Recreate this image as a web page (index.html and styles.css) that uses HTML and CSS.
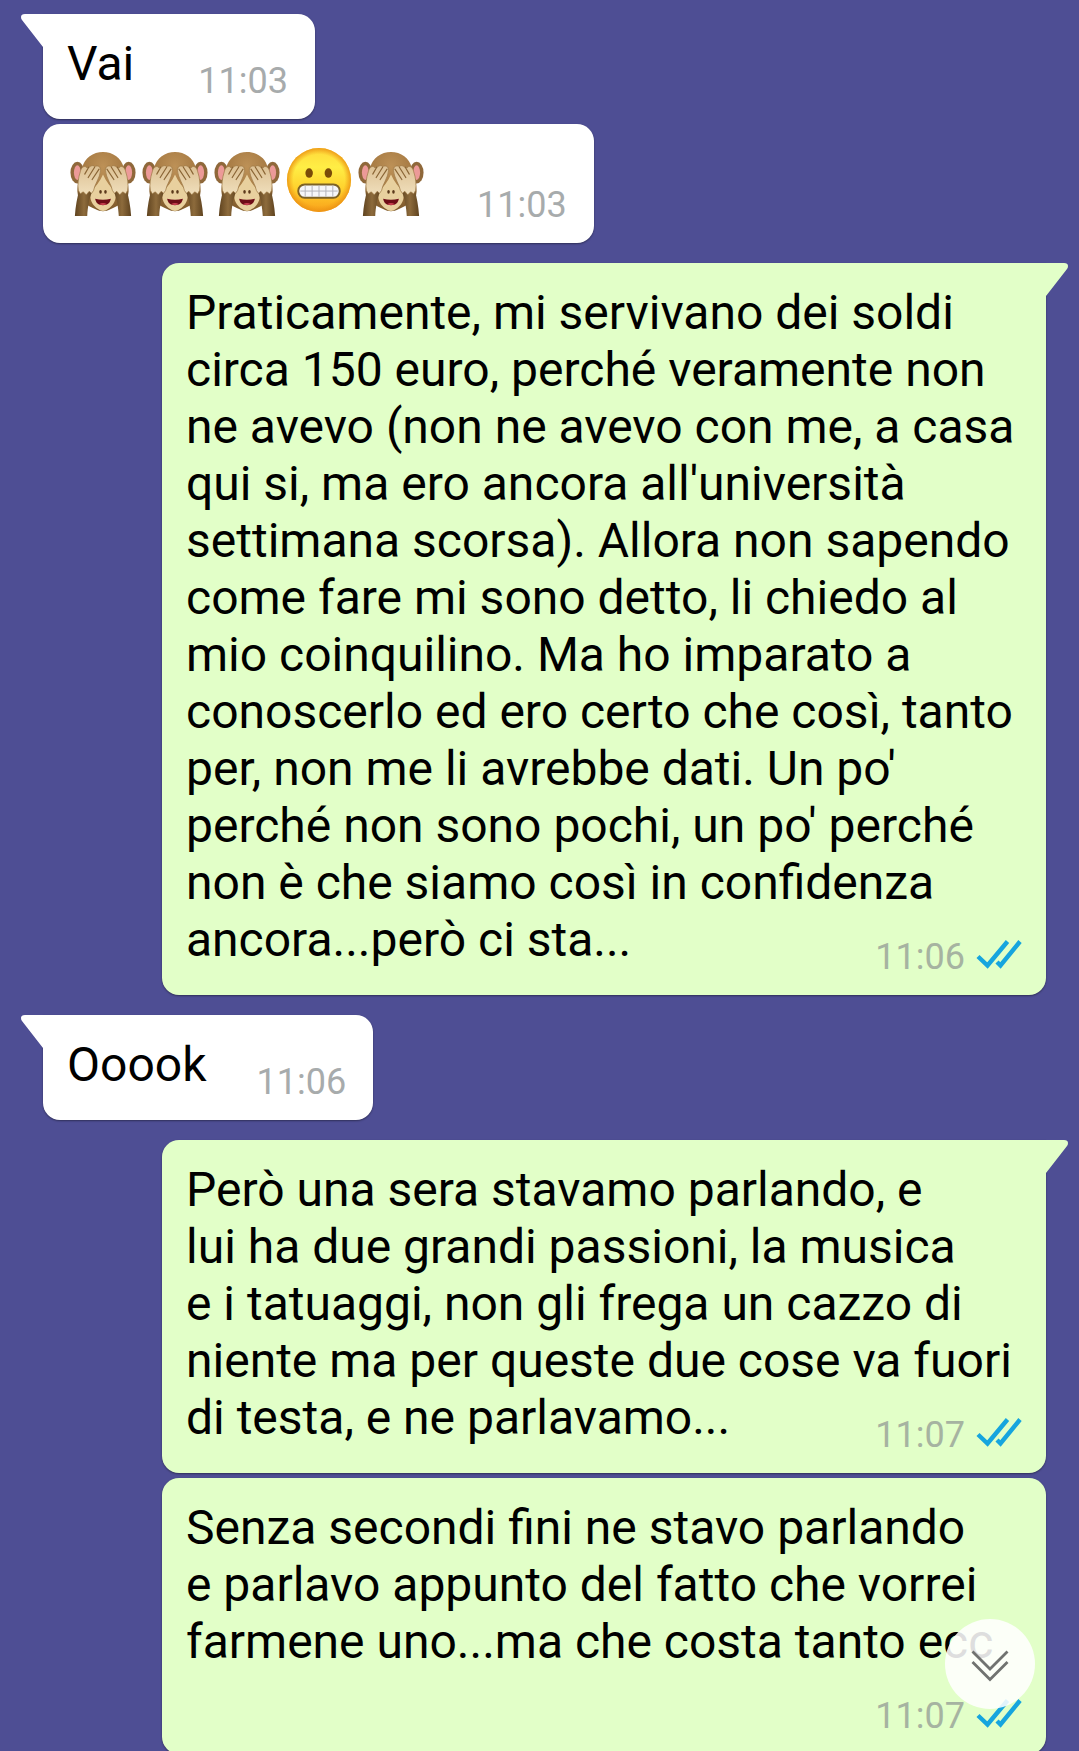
FILE: index.html
```html
<!DOCTYPE html>
<html lang="it">

<head>
    <meta charset="UTF-8">
    <meta name="viewport" content="width=device-width, initial-scale=1.0">
    <title>Chat</title>
    <link rel="stylesheet" href="styles.css">
</head>

<body>
    <!-- Shared drawings -->
    <svg class="defs" aria-hidden="true">
        <defs>
            <radialGradient id="fur" cx="50%" cy="25%" r="75%">
                <stop offset="0" stop-color="#bd9157" />
                <stop offset="0.55" stop-color="#a67a43" />
                <stop offset="1" stop-color="#7d592b" />
            </radialGradient>
            <linearGradient id="arm" x1="0" x2="1" y1="0" y2="0">
                <stop offset="0" stop-color="#5f431f" />
                <stop offset="0.5" stop-color="#8d6b3c" />
                <stop offset="1" stop-color="#5f431f" />
            </linearGradient>
            <linearGradient id="skin" x1="0" x2="0" y1="0" y2="1">
                <stop offset="0" stop-color="#dcc093" />
                <stop offset="1" stop-color="#f0dfbc" />
            </linearGradient>
            <linearGradient id="yellow" x1="0" x2="0" y1="0" y2="1">
                <stop offset="0" stop-color="#ffd83a" />
                <stop offset="0.3" stop-color="#ffee45" />
                <stop offset="0.65" stop-color="#ffd02c" />
                <stop offset="1" stop-color="#f9a01a" />
            </linearGradient>
            <radialGradient id="rim">
                <stop offset="0.8" stop-color="#f09a16" stop-opacity="0" />
                <stop offset="1" stop-color="#ea9012" stop-opacity="0.85" />
            </radialGradient>
        </defs>
        <symbol id="monkey" viewBox="0 0 72 72">
            <ellipse cx="10" cy="28" rx="7" ry="11" fill="#8f683a" />
            <ellipse cx="62" cy="28" rx="7" ry="11" fill="#8f683a" />
            <ellipse cx="10" cy="28" rx="3.500" ry="7.500" fill="#ec9a98" />
            <ellipse cx="62" cy="28" rx="3.500" ry="7.500" fill="#ec9a98" />
            <path d="M36 7C46 7 55 13 57 23C59 29 62 39 62 47C62 57 51 62 44 65C38 68 34 68 28 65C21 62 10 57 10 47C10 39 13 29 15 23C17 13 26 7 36 7Z" fill="url(#fur)" />
            <path d="M36 30C39 37 44 43 48 47C51 55 46 62 41 65Q36 69 31 65C26 62 21 55 24 47C28 43 33 37 36 30Z" fill="#e8d09e" />
            <path d="M28 54.500Q36 56.500 44 54.500C43 59 41 61 36 61C31 61 29 59 28 54.500Z" fill="#6e0d17" />
            <path d="M32 60Q36 57.500 40 60Q36 61.500 32 60Z" fill="#c94050" />
            <ellipse cx="33.500" cy="47.500" rx="1.300" ry="1.900" fill="#5b3a1c" />
            <ellipse cx="38.500" cy="47.500" rx="1.300" ry="1.900" fill="#5b3a1c" />
            <g id="hand">
                <path d="M12 45L26 45C22 53 20.500 63 20 72H7.500C8 62 10 53 12 45Z" fill="url(#arm)" />
                <path d="M22 22.500C24 20.500 26.500 20.500 27.500 22C30.500 20 34 22 33.500 26C33 33 27 41 26.500 46L24.500 49L22 47L19 50.500L16 47.500L13 49.500L11 46C10 40 11 33 13 27C14 22 18 20.500 19.500 23Z" fill="url(#skin)" stroke="#9c7845" stroke-width="0.700" />
                <path d="M21.500 22.500L17.500 29.500M27.500 22.500L21 33M32 24.500L25 35" fill="none" stroke="#8a6535" stroke-width="1.200" stroke-linecap="round" />
            </g>
            <use href="#hand" transform="matrix(-1 0 0 1 72 0)" />
        </symbol>
        <symbol id="grimace" viewBox="0 0 72 72">
            <circle cx="36" cy="35.500" r="32.500" fill="url(#yellow)" />
            <circle cx="36" cy="35.500" r="32.500" fill="url(#rim)" />
            <ellipse cx="26" cy="28.500" rx="3.800" ry="4.800" fill="#7a4a08" />
            <ellipse cx="45.500" cy="28.500" rx="3.800" ry="4.800" fill="#7a4a08" />
            <rect x="15" y="40" width="42" height="13.500" rx="6.500" fill="#f6f6f8" stroke="#7d6224" stroke-width="2" />
            <path d="M17 46.700H55M22 41V52.500M29 41V52.500M36 41V52.500M43 41V52.500M50 41V52.500" fill="none" stroke="#b4b4ba" />
        </symbol>
        <symbol id="ticks" viewBox="0 0 46 30">
            <path d="M2 17.500L11.500 26.500L31.500 2.500M21 23L24.500 26.500L44 2.500" fill="none" stroke="#16a5de" stroke-width="4.400" />
        </symbol>
    </svg>

    <main class="chat">
        <div class="message received first">
            <p class="text">Vai</p>
            <div class="meta"><time>11:03</time></div>
        </div>
        <div class="message received">
            <p class="emojis">
                <svg role="img" aria-label="🙈"><use href="#monkey" /></svg>
                <svg role="img" aria-label="🙈"><use href="#monkey" /></svg>
                <svg role="img" aria-label="🙈"><use href="#monkey" /></svg>
                <svg role="img" aria-label="😬"><use href="#grimace" /></svg>
                <svg role="img" aria-label="🙈"><use href="#monkey" /></svg>
            </p>
            <div class="meta"><time>11:03</time></div>
        </div>

        <div class="message sent first">
            Praticamente, mi servivano dei soldi<br>
            circa 150 euro, perché veramente non<br>
            ne avevo (non ne avevo con me, a casa<br>
            qui si, ma ero ancora all'università<br>
            settimana scorsa). Allora non sapendo<br>
            come fare mi sono detto, li chiedo al<br>
            mio coinquilino. Ma ho imparato a<br>
            conoscerlo ed ero certo che così, tanto<br>
            per, non me li avrebbe dati. Un po'<br>
            perché non sono pochi, un po' perché<br>
            non è che siamo così in confidenza<br>
            ancora...però ci sta...
            <div class="meta"><time>11:06</time><svg class="ticks"><use href="#ticks" /></svg></div>
        </div>

        <div class="message received first">
            <p class="text">Ooook</p>
            <div class="meta"><time>11:06</time></div>
        </div>

        <div class="message sent first">
            Però una sera stavamo parlando, e<br>
            lui ha due grandi passioni, la musica<br>
            e i tatuaggi, non gli frega un cazzo di<br>
            niente ma per queste due cose va fuori<br>
            di testa, e ne parlavamo...
            <div class="meta"><time>11:07</time><svg class="ticks"><use href="#ticks" /></svg></div>
        </div>
        <div class="message sent">
            Senza secondi fini ne stavo parlando<br>
            e parlavo appunto del fatto che vorrei<br>
            farmene uno...ma che costa tanto ecc
            <div class="meta"><time>11:07</time><svg class="ticks"><use href="#ticks" /></svg></div>
        </div>
    </main>

    <button class="scroll-down" type="button" aria-label="Vai in fondo">
        <svg viewBox="0 0 90 90">
            <path d="M27.500 32.500L45 50L62.500 32.500M27.500 43L45 60.500L62.500 43" fill="none" stroke="#707270" stroke-width="2.800" />
        </svg>
    </button>
</body>

</html>
```
FILE: styles.css
```css
* {
    box-sizing: border-box;
}

body {
    margin: 0;
    height: 100vh;
    overflow: hidden;
    background-color: #4e4e94;
    font-family: Roboto, "Noto Sans", sans-serif;
    font-size: 48px;
    line-height: 57px;
    color: #000;
}

.defs {
    position: absolute;
    width: 0;
    height: 0;
}

.chat {
    display: flex;
    flex-direction: column;
    align-items: flex-start;
    gap: 5px;
    padding: 0 33px 0 43px;
}

.message {
    position: relative;
    padding: 21px 24px 14px;
    border-radius: 17px;
    box-shadow: 0 1px 2px rgba(0, 0, 0, 0.4);
}

.message.first {
    margin-top: 15px;
}

.message.first:first-child {
    margin-top: 14px;
}

.received {
    display: flex;
    justify-content: space-between;
    align-items: flex-end;
    gap: 50px;
    min-width: 272px;
    background-color: #fff;
}

.sent {
    display: flow-root;
    align-self: stretch;
    margin-left: 119px;
    background-color: #e2ffc8;
}

.received.first {
    border-top-left-radius: 0;
}

.sent.first {
    border-top-right-radius: 0;
}

/* Bubble tails */
.first::before {
    content: "";
    position: absolute;
    top: 0;
    width: 23px;
    height: 34px;
    background-color: inherit;
}

.received.first::before {
    right: calc(100% - 1px);
    clip-path: path("M23 0H4Q0 0 0 3Q0 5 1 6L22 33H23Z");
}

.sent.first::before {
    left: calc(100% - 1px);
    clip-path: path("M0 0H19Q23 0 23 3Q23 5 22 6L1 33H0Z");
}

.text,
.emojis {
    margin: 0 0 13px;
}

.emojis {
    display: flex;
}

.emojis svg {
    width: 72px;
    height: 71px;
}

.meta {
    display: flex;
    align-items: flex-end;
    gap: 11px;
    font-size: 36px;
    line-height: 48px;
    color: #a7abac;
}

.received .meta {
    padding-right: 3px;
}

.sent .meta {
    float: right;
    height: 70px;
    color: #a6b3a1;
}

.ticks {
    width: 46px;
    height: 30px;
    margin-bottom: 12px;
}

.scroll-down {
    position: fixed;
    right: 44px;
    bottom: 42px;
    width: 90px;
    height: 90px;
    padding: 0;
    border: 0;
    border-radius: 50%;
    background-color: rgba(255, 255, 255, 0.87);
}

.scroll-down svg {
    display: block;
}
```
